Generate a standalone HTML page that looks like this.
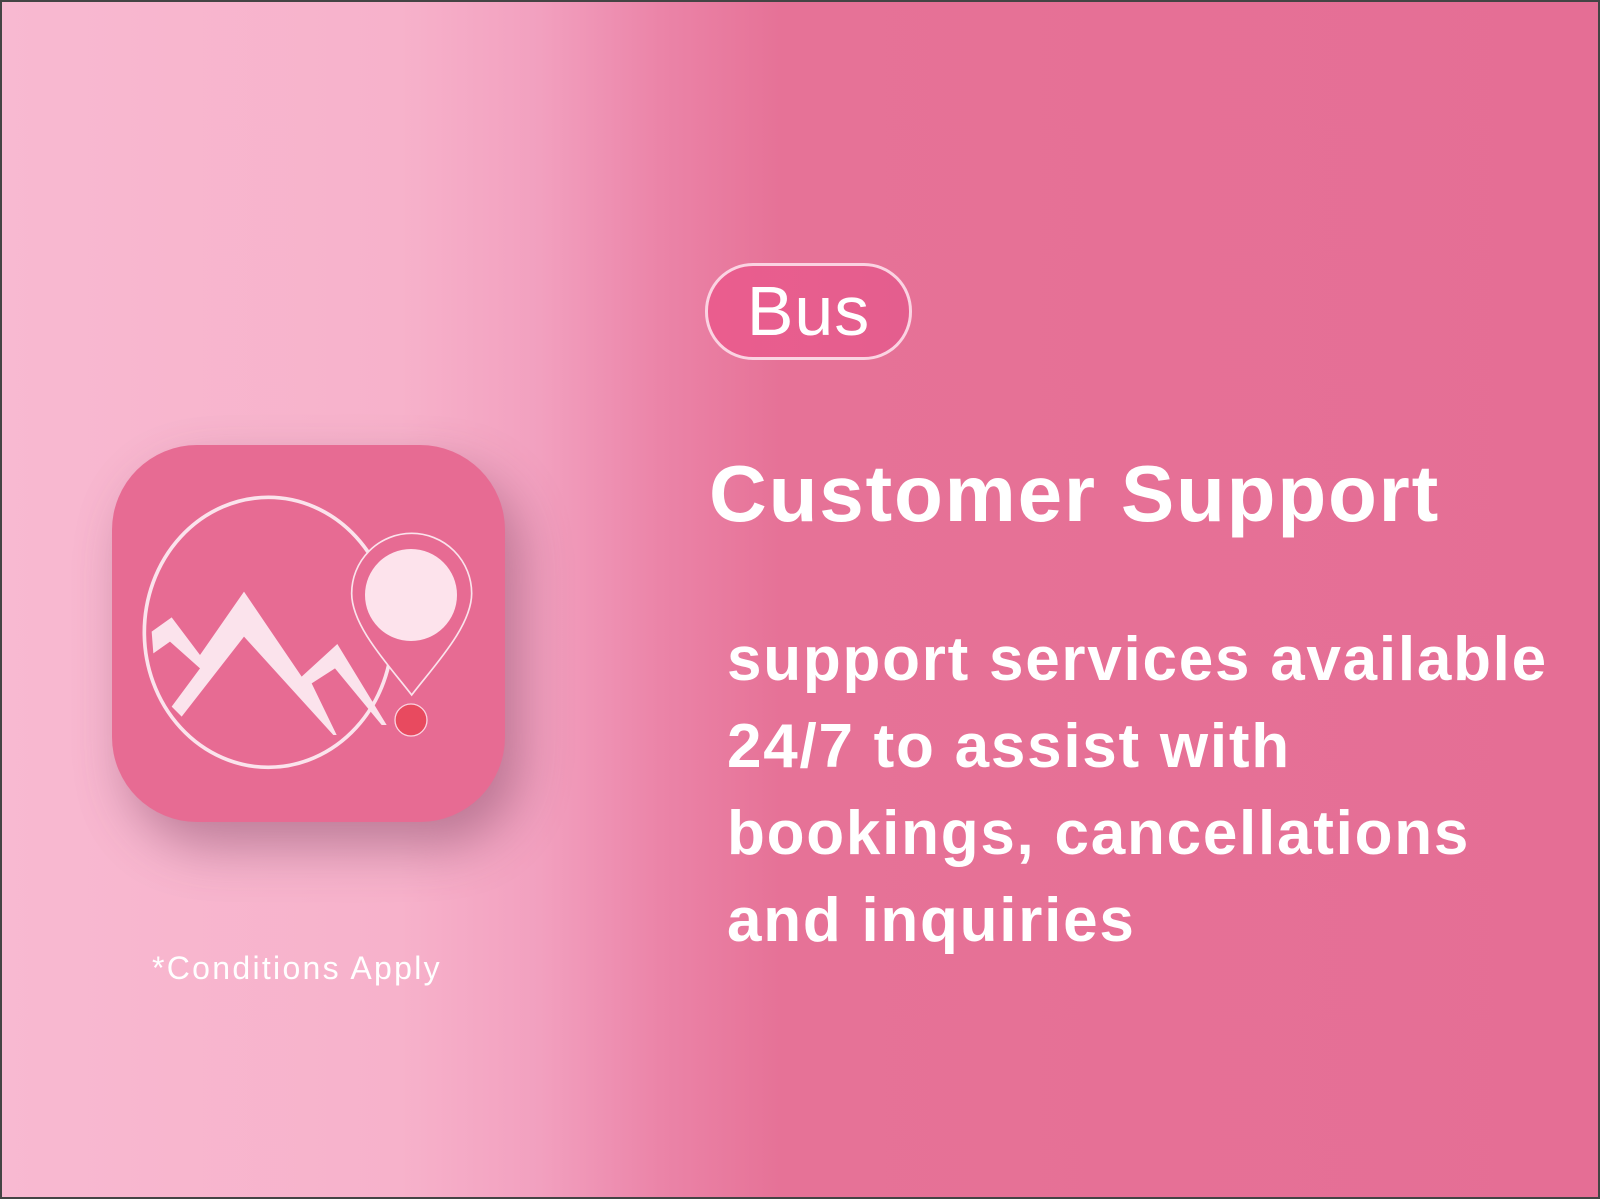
<!DOCTYPE html>
<html><head><style>
html,body{margin:0;padding:0}
body{width:1600px;height:1199px;overflow:hidden;position:relative;font-family:"Liberation Sans",sans-serif;
background:linear-gradient(90deg,#f8b9d1 0px,#f7b2cb 400px,#f2a0bf 540px,#eb84a8 660px,#e67297 780px,#e56e95 1600px);
box-shadow:inset 0 0 0 2px #444;}
.box{position:absolute;left:112px;top:445px;width:393px;height:377px;border-radius:85px;background:#e76b93;
box-shadow:15px 25px 50px rgba(120,60,90,.45)}
.pill{position:absolute;left:705px;top:263px;width:201px;height:91px;border:3px solid #fbd3e2;border-radius:48px;
background:linear-gradient(90deg,#ea5d8e,#e45e8e);color:#fff;font-size:70px;font-weight:300;line-height:91px;text-align:center;letter-spacing:1px}
.h{position:absolute;left:709px;top:448px;color:#fff;font-weight:bold;font-size:80px;white-space:nowrap;letter-spacing:1.8px}
.b{position:absolute;left:727px;top:616px;color:#fff;font-weight:bold;font-size:62px;line-height:87px;white-space:nowrap;letter-spacing:1.75px}
.c{position:absolute;left:152px;top:950px;color:#fff;font-size:32px;white-space:nowrap;letter-spacing:2.3px}
</style></head><body>
<div class="box"></div>
<svg style="position:absolute;left:100px;top:420px" width="420" height="420" viewBox="0 0 1260 1260">
<ellipse cx="505" cy="637" rx="372" ry="405" fill="none" stroke="#fbe3ec" stroke-width="11"/>
<polygon fill="#fbe3ec" points="155,635 215,592 300,705 432,515 605,770 712,672 860,915 845,915 705,745 635,790 710,945 700,945 432,650 245,890 215,860 300,745 210,665 160,700"/>
<path d="M935,825 C870,740 755,620 755,520 A180,180 0 0 1 1115,520 C1115,620 1000,740 935,825Z" fill="#e76b93" stroke="#fbe3ec" stroke-width="5"/>
<circle cx="933" cy="525" r="138" fill="#fde3ec"/>
<circle cx="933" cy="900" r="48" fill="#e84a5f" stroke="#fbd3e0" stroke-width="4"/>
</svg>
<div class="pill">Bus</div>
<div class="h">Customer Support</div>
<div class="b">support services available<br>24/7 to assist with<br>bookings, cancellations<br>and inquiries</div>
<div class="c">*Conditions Apply</div>
</body></html>
